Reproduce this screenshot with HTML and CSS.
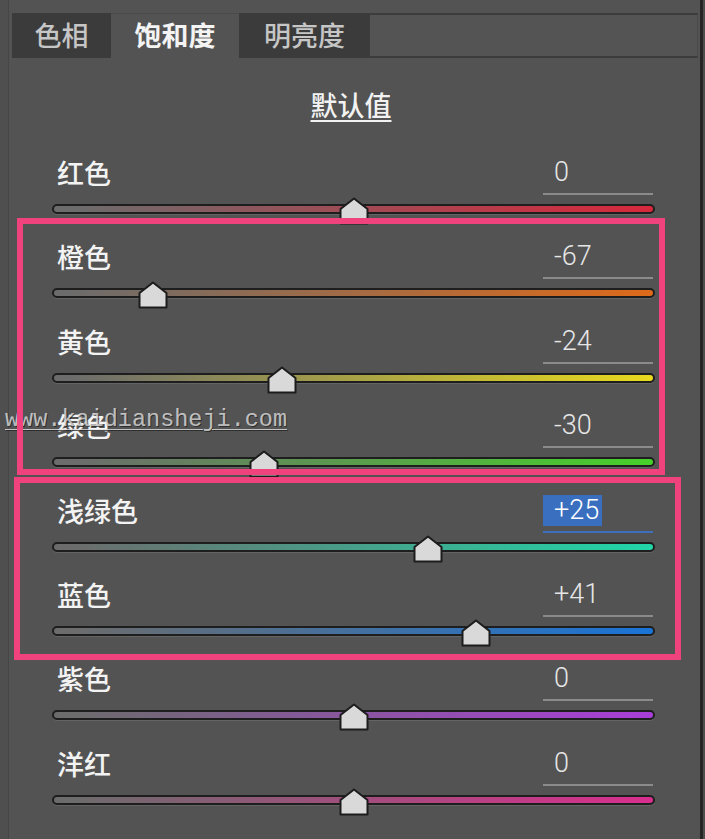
FILE: index.html
```html
<!DOCTYPE html>
<html lang="zh-CN">
<head>
<meta charset="utf-8">
<title>HSL 饱和度</title>
<link rel="stylesheet" href="styles.css">
</head>
<body>
<div class="panel">
  <div class="tabs">
    <div class="tab">色相</div>
    <div class="tab active">饱和度</div>
    <div class="tab">明亮度</div>
    <div class="tab-fill"></div>
  </div>

  <div class="defaults"><span>默认值</span></div>

  <div class="sliders">
    <div class="row red">
      <div class="row-head"><span class="label">红色</span><span class="value"><span class="num">0</span></span></div>
      <div class="track"><svg class="thumb" style="left:50%" viewBox="0 0 30 28"><polygon points="15,1.5 28.5,12 28.5,26.5 1.5,26.5 1.5,12"/></svg></div>
    </div>
    <div class="row orange">
      <div class="row-head"><span class="label">橙色</span><span class="value"><span class="num">-67</span></span></div>
      <div class="track"><svg class="thumb" style="left:16.5%" viewBox="0 0 30 28"><polygon points="15,1.5 28.5,12 28.5,26.5 1.5,26.5 1.5,12"/></svg></div>
    </div>
    <div class="row yellow">
      <div class="row-head"><span class="label">黄色</span><span class="value"><span class="num">-24</span></span></div>
      <div class="track"><svg class="thumb" style="left:38%" viewBox="0 0 30 28"><polygon points="15,1.5 28.5,12 28.5,26.5 1.5,26.5 1.5,12"/></svg></div>
    </div>
    <div class="row green">
      <div class="row-head"><span class="label">绿色</span><span class="value"><span class="num">-30</span></span></div>
      <div class="track"><svg class="thumb" style="left:35%" viewBox="0 0 30 28"><polygon points="15,1.5 28.5,12 28.5,26.5 1.5,26.5 1.5,12"/></svg></div>
    </div>
    <div class="row aqua">
      <div class="row-head"><span class="label">浅绿色</span><span class="value focused"><span class="num selected">+25</span></span></div>
      <div class="track"><svg class="thumb" style="left:62.5%" viewBox="0 0 30 28"><polygon points="15,1.5 28.5,12 28.5,26.5 1.5,26.5 1.5,12"/></svg></div>
    </div>
    <div class="row blue">
      <div class="row-head"><span class="label">蓝色</span><span class="value"><span class="num">+41</span></span></div>
      <div class="track"><svg class="thumb" style="left:70.5%" viewBox="0 0 30 28"><polygon points="15,1.5 28.5,12 28.5,26.5 1.5,26.5 1.5,12"/></svg></div>
    </div>
    <div class="row purple">
      <div class="row-head"><span class="label">紫色</span><span class="value"><span class="num">0</span></span></div>
      <div class="track"><svg class="thumb" style="left:50%" viewBox="0 0 30 28"><polygon points="15,1.5 28.5,12 28.5,26.5 1.5,26.5 1.5,12"/></svg></div>
    </div>
    <div class="row magenta">
      <div class="row-head"><span class="label">洋红</span><span class="value"><span class="num">0</span></span></div>
      <div class="track"><svg class="thumb" style="left:50%" viewBox="0 0 30 28"><polygon points="15,1.5 28.5,12 28.5,26.5 1.5,26.5 1.5,12"/></svg></div>
    </div>
  </div>

  <div class="watermark">www.kaidiansheji.com</div>
  <div class="mark mark-warm"></div>
  <div class="mark mark-cool"></div>
</div>
</body>
</html>
```

FILE: styles.css
```css
* { box-sizing: border-box; }

html, body {
  margin: 0;
  padding: 0;
}

body {
  background: #4f4f4f;
  width: 705px;
  height: 839px;
  overflow: hidden;
  font-family: "Noto Sans CJK SC", "Noto Sans", sans-serif;
}

.panel {
  position: relative;
  margin-left: 8px;
  width: 695px;
  height: 839px;
  padding-top: 13px;
  background: #535353;
  border-left: 1px solid #464646;
  border-right: 3px solid #262626;
}

/* tab strip */
.tabs {
  display: flex;
  height: 45px;
  margin: 0 2px 0 3px;
}

.tab {
  height: 45px;
  line-height: 43px;
  text-align: center;
  font-size: 27px;
  font-weight: 500;
  color: #c6c6c6;
  background: #3b3b3b;
}

.tab:nth-child(1) { width: 99px; }
.tab:nth-child(2) { width: 128px; }
.tab:nth-child(3) { width: 131px; }

.tab.active {
  background: #535353;
  color: #f4f4f4;
  font-weight: 700;
  border-top: 1px solid #4a4a4a;
  line-height: 42px;
}

.tab-fill {
  flex: 1;
  background: #545454;
  border-top: 2px solid #3c3c3c;
  border-bottom: 2px solid #3c3c3c;
  border-right: 1px solid #4a4a4a;
}

/* reset link */
.defaults {
  height: 93px;
  padding-top: 31px;
  padding-right: 7px;
  text-align: center;
  font-size: 27px;
  line-height: 32px;
  font-weight: 500;
  color: #f2f2f2;
}

.defaults span {
  text-decoration: underline;
  text-decoration-thickness: 2px;
  text-underline-offset: 4px;
}

/* slider rows */
.row {
  height: 84.4px;
}

.row-head {
  display: flex;
  justify-content: space-between;
  align-items: center;
  height: 44px;
  padding: 0 47px 0 48px;
}

.label {
  font-size: 27px;
  line-height: 42px;
  font-weight: 500;
  color: #f3f3f3;
}

.value {
  display: flex;
  align-items: center;
  width: 110px;
  height: 44px;
  border-bottom: 2px solid #8b8b8b;
  padding-top: 1px;
}

.value.focused {
  border-bottom-color: #3c6fc0;
}

.num {
  display: inline-block;
  padding: 0 3px 0 11px;
  height: 31px;
  line-height: 31px;
  font-family: Roboto, "Open Sans", "Liberation Sans", sans-serif;
  font-weight: 300;
  font-size: 27px;
  color: #e6e6e6;
}

.num.selected {
  background: #3a6fc0;
  color: #ffffff;
}

.track {
  position: relative;
  height: 10px;
  margin: 9px 45px 0 43px;
  border: 2px solid #1e1e1e;
  border-radius: 5px;
  box-shadow: 0 1px 0 rgba(255, 255, 255, 0.1);
}

.thumb {
  position: absolute;
  top: -9px;
  width: 30px;
  height: 28px;
  transform: translateX(-50%);
  overflow: visible;
}

.thumb polygon {
  fill: #d9d9d9;
  stroke: #1c1c1c;
  stroke-width: 2;
  stroke-linejoin: round;
}

.red .track     { background: linear-gradient(to right, #6c6c6c 3%, #d8283c 100%); }
.orange .track  { background: linear-gradient(to right, #6c6c6c 3%, #de6a1a 100%); }
.yellow .track  { background: linear-gradient(to right, #6c6c6c 3%, #e8da1e 100%); }
.green .track   { background: linear-gradient(to right, #6c6c6c 3%, #46d12a 100%); }
.aqua .track    { background: linear-gradient(to right, #6c6c6c 3%, #20d6a8 100%); }
.blue .track    { background: linear-gradient(to right, #6c6c6c 3%, #1a74d6 100%); }
.purple .track  { background: linear-gradient(to right, #6c6c6c 3%, #a93ed8 100%); }
.magenta .track { background: linear-gradient(to right, #6c6c6c 3%, #d92e8e 100%); }

/* site stamp across the green row */
.watermark {
  position: absolute;
  left: -4px;
  top: 406px;
  font-family: "Liberation Mono", monospace;
  font-size: 23.5px;
  line-height: 28px;
  color: rgba(225, 225, 225, 0.8);
  text-shadow: 1px 1px 0 rgba(30, 30, 30, 0.7);
  text-decoration: underline;
  text-decoration-thickness: 1px;
  text-underline-offset: 3px;
  pointer-events: none;
}

/* highlight frames drawn over the slider groups */
.mark {
  position: absolute;
  border: 6px solid #f0427c;
  pointer-events: none;
}

.mark-warm {
  left: 8px;
  top: 218px;
  width: 648px;
  height: 257px;
}

.mark-cool {
  left: 5px;
  top: 477px;
  width: 667px;
  height: 183px;
}
```
